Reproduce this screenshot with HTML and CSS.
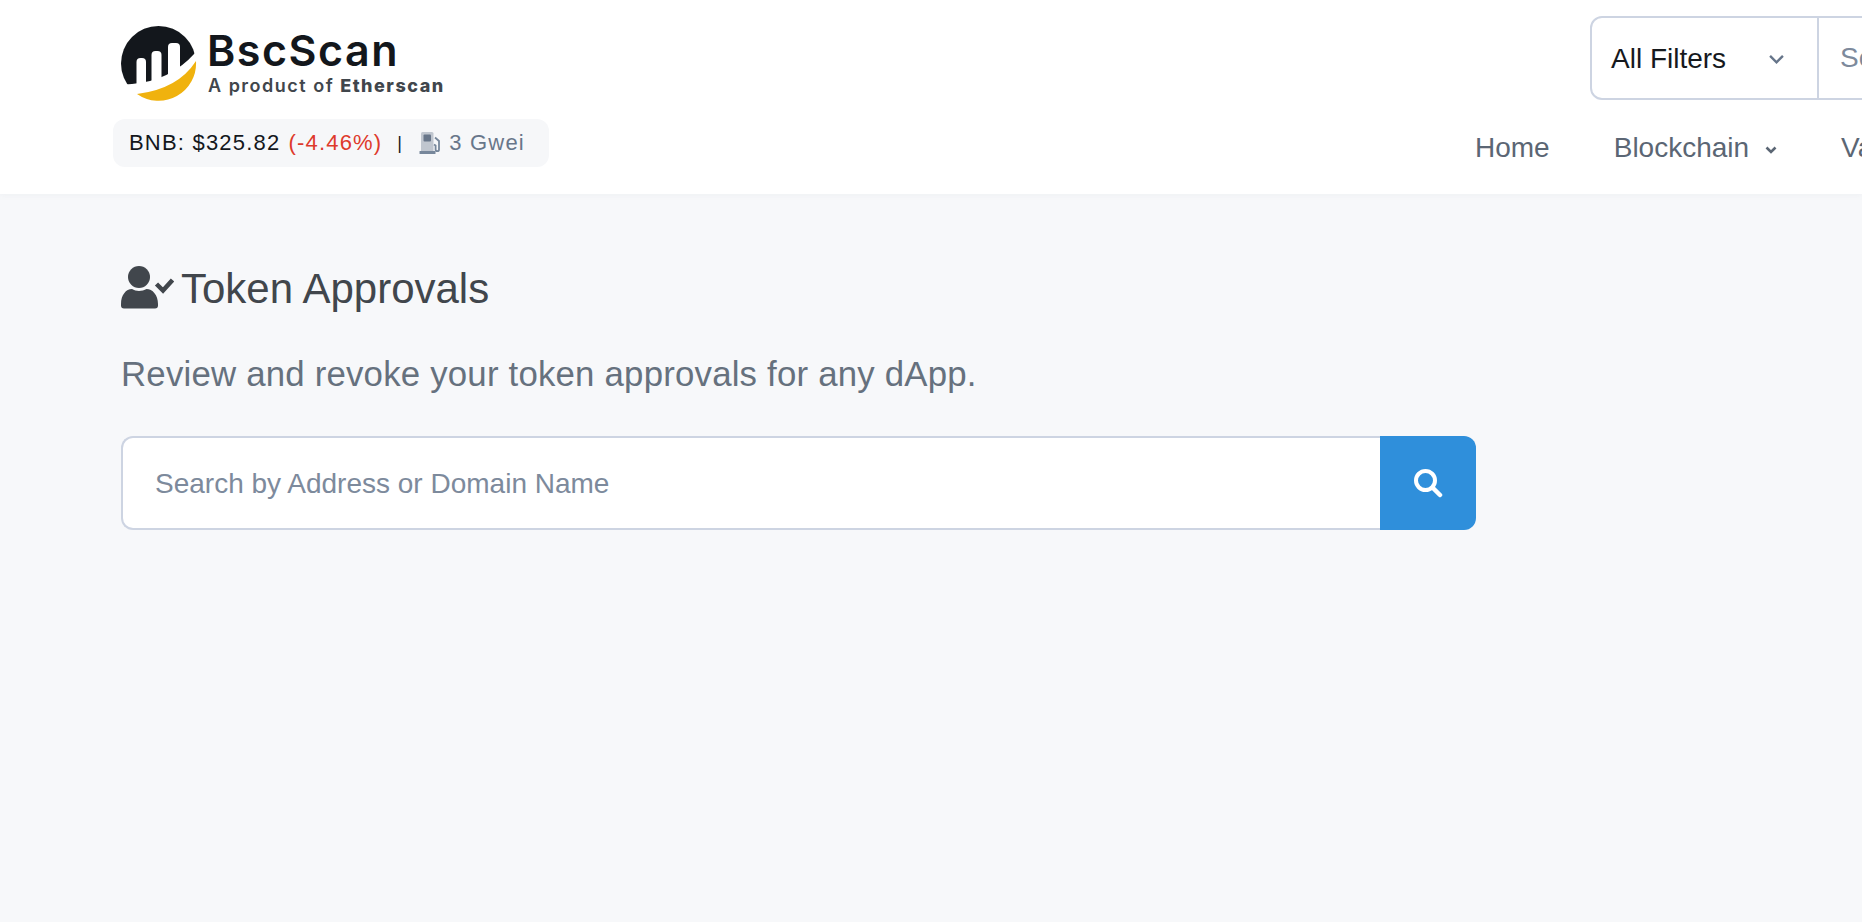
FILE: index.html
```html
<!DOCTYPE html>
<html lang="en">
<head>
<meta charset="utf-8">
<title>Token Approvals</title>
<link rel="stylesheet" href="styles.css">
</head>
<body>
<header class="header">
  <div class="brand-col">
    <a class="logo">
      <svg class="logo-mark" viewBox="11 11 76 76" width="76" height="76">
        <circle cx="48.5" cy="48.5" r="37.5" fill="#13171c"/>
        <path d="M8 70 L22 69 Q60 66 85 38 L95 38 L95 95 L8 95Z" fill="#fff"/>
        <path d="M26.5 75V47a4 4 0 0 1 4-4h1.500a4 4 0 0 1 4 4V75Z" fill="#fff"/>
        <path d="M41.500 72V40a4 4 0 0 1 4-4h2a4 4 0 0 1 4 4V72Z" fill="#fff"/>
        <path d="M58 65V32a4 4 0 0 1 4-4h4a4 4 0 0 1 4 4V65Z" fill="#fff"/>
        <path d="M27 79Q68 74 86 46A37.500 37.500 0 0 1 27 79Z" fill="#f0b20e"/>
      </svg>
      <div class="wordmark">
        <div class="wordmark-name">BscScan</div>
        <div class="wordmark-sub">A product of <b>Etherscan</b></div>
      </div>
    </a>
    <div class="price-pill">
      <span class="price">BNB: $325.82</span>
      <span class="change">(-4.46%)</span>
      <span class="sep">|</span>
      <svg class="gas" viewBox="0 0 24 22" width="24" height="22">
        <path d="M2 1.500A1.500 1.500 0 0 1 3.500 0H13a1.500 1.500 0 0 1 1.500 1.500V19H2Z" fill="#c0c6cf"/>
        <rect x="4.500" y="2.500" width="7.500" height="7" rx="1" fill="#68768a"/>
        <rect x="0.500" y="19" width="16" height="3" rx=".5" fill="#77879b"/>
        <path d="M16 5.500l4 3.500v8.500a1.700 1.700 0 0 1-3.400 0V13.500L15 12.500" fill="none" stroke="#77879b" stroke-width="1.800"/>
      </svg>
      <span class="gwei">3 Gwei</span>
    </div>
  </div>
  <div class="top-right">
    <div class="search-box">
      <div class="filter">
        <span>All Filters</span>
        <svg viewBox="0 0 18 12" width="17" height="11"><path d="M2 2l7 7 7-7" fill="none" stroke="#66758a" stroke-width="2.600"/></svg>
      </div>
      <div class="top-placeholder">Search by Address / Txn Hash / Block / Token / Domain Name</div>
    </div>
    <nav class="nav">
      <a class="nav-item">Home</a>
      <a class="nav-item">Blockchain
        <svg viewBox="0 0 12 9" width="12" height="9"><path d="M1.500 1.500L6 6l4.500-4.500" fill="none" stroke="#5b6674" stroke-width="2.600"/></svg>
      </a>
      <a class="nav-item">Validators</a>
    </nav>
  </div>
</header>
<main class="main">
  <h1 class="title">
    <svg class="title-icon" viewBox="0 0 53 43" width="53" height="43">
      <circle cx="18" cy="11" r="11" fill="#41464c"/>
      <path d="M0 38c0-9 5-15 11-15 2 1 4.500 2 7 2s5.500-1 7.500-2c6 0 11.500 6 11.500 15v1.500a3 3 0 0 1-3 3H3a3 3 0 0 1-3-3Z" fill="#41464c"/>
      <path d="M35.500 18l6.500 6.500 9.500-10.500" fill="none" stroke="#41464c" stroke-width="4.500"/>
    </svg>
    <span>Token Approvals</span>
  </h1>
  <p class="subtitle">Review and revoke your token approvals for any dApp.</p>
  <form class="search">
    <div class="search-input">Search by Address or Domain Name</div>
    <button class="search-btn" type="button">
      <svg viewBox="0 0 30 30" width="30" height="30"><circle cx="12.500" cy="12.500" r="9.500" fill="none" stroke="#fff" stroke-width="4"/><path d="M20 20l7 7" stroke="#fff" stroke-width="4.500" stroke-linecap="round"/></svg>
    </button>
  </form>
</main>
</body>
</html>
```
FILE: styles.css
```css
* { box-sizing: border-box; }
html, body { margin: 0; height: 100%; overflow: hidden; }
body {
  background: #f7f8fa;
  font-family: "Liberation Sans", Arial, sans-serif;
  width: 1862px;
  height: 922px;
}
.header {
  height: 194px;
  background: #fff;
  display: flex;
  padding-left: 113px;
  box-shadow: 0 2px 6px rgba(100, 110, 130, .05);
}
.brand-col { width: 1362px; flex: none; padding-top: 26px; }
.logo { display: flex; margin-left: 8px; height: 93px; }
.logo-mark { display: block; flex: none; }
.wordmark { margin-left: 11px; margin-top: -1px; }
.wordmark-name {
  font-family: Inter, sans-serif;
  font-weight: 600;
  font-size: 43px;
  line-height: 50px;
  color: #13171c;
  letter-spacing: 1.5px;
  margin-left: -1px;
}
.wordmark-sub {
  font-family: Inter, sans-serif;
  font-weight: 600;
  font-size: 18px;
  line-height: 22px;
  color: #41464c;
  letter-spacing: 1.5px;
  white-space: nowrap;
}
.wordmark-sub b { font-weight: 800; }
.price-pill {
  width: 436px;
  height: 48px;
  background: #f6f7f9;
  border-radius: 12px;
  display: flex;
  align-items: center;
  padding-left: 16px;
  font-size: 22px;
  letter-spacing: 1.2px;
}
.price { color: #14181d; }
.change { color: #de3a2c; margin-left: 8px; }
.sep { color: #14181d; margin-left: 15px; font-size: 18px; }
.gas { margin-left: 16px; flex: none; }
.gwei { color: #68768a; margin-left: 6px; }
.top-right { flex: none; width: 700px; padding-top: 16px; }
.search-box {
  margin-left: 115px;
  width: 560px;
  height: 84px;
  border: 2px solid #cdd4e2;
  border-radius: 12px;
  display: flex;
  align-items: center;
}
.filter {
  width: 227px;
  height: 100%;
  flex: none;
  border-right: 2px solid #cdd4e2;
  display: flex;
  align-items: center;
  justify-content: space-between;
  padding: 2px 32px 0 19px;
  font-size: 28px;
  color: #16191d;
}
.top-placeholder {
  padding-left: 21px;
  font-size: 28px;
  color: #7d8a9c;
  white-space: nowrap;
}
.nav {
  display: flex;
  gap: 64px;
  margin-top: 31px;
  font-size: 28px;
  line-height: 34px;
  color: #5b6674;
}
.nav-item { display: flex; align-items: center; gap: 16px; white-space: nowrap; }
.nav-item svg { margin-top: 4px; }
.main { padding: 72px 0 0 121px; }
.title {
  margin: 0;
  height: 46px;
  display: flex;
  align-items: center;
  gap: 7px;
  font-weight: 400;
  font-size: 42px;
  line-height: 46px;
  color: #41464c;
}
.title-icon { display: block; flex: none; margin-bottom: 4px; }
.subtitle {
  margin: 41px 0 0;
  font-size: 34.800px;
  line-height: 42px;
  color: #66717e;
  letter-spacing: .2px;
}
.search { display: flex; width: 1355px; height: 94px; margin-top: 41px; }
.search-input {
  flex: 1;
  background: #fff;
  border: 2px solid #cdd4e2;
  border-right: 0;
  border-radius: 12px 0 0 12px;
  padding: 2px 0 0 32px;
  display: flex;
  align-items: center;
  font-size: 28px;
  color: #7d8a9c;
}
.search-btn {
  width: 96px;
  background: #2f8fdb;
  border: 0;
  padding: 0;
  border-radius: 0 12px 12px 0;
  display: flex;
  align-items: center;
  justify-content: center;
}
```
